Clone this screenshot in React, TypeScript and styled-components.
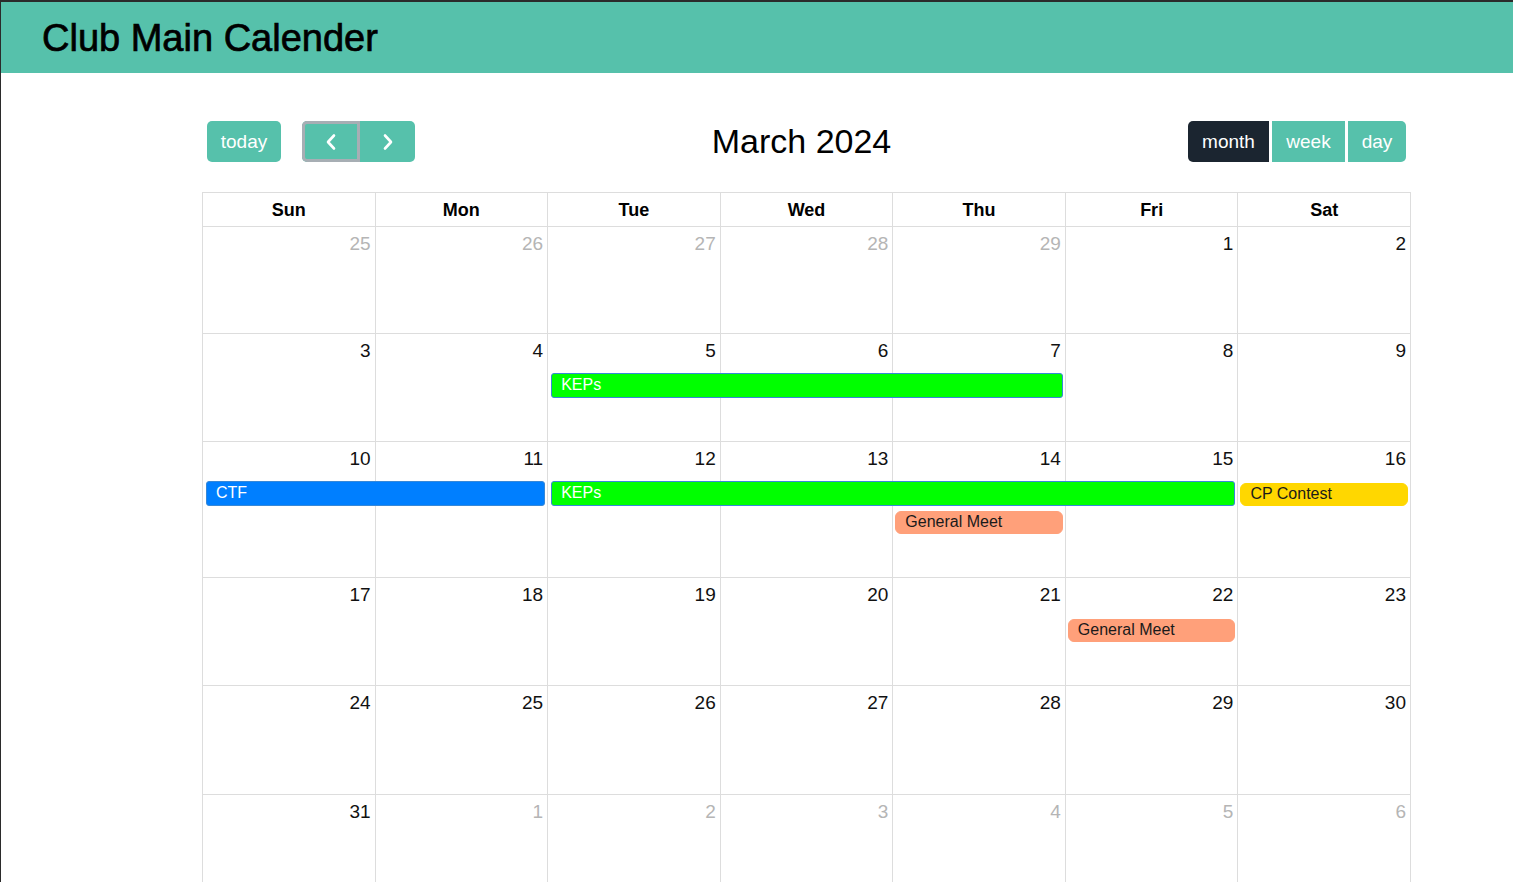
import React from "react";
import styled, { createGlobalStyle } from "styled-components";

const GlobalStyle = createGlobalStyle`
  html, body { margin: 0; padding: 0; background: #fff; }
  body { font-family: "Liberation Sans", Arial, sans-serif; color: #000; }
  * { box-sizing: border-box; }
`;

const Page = styled.div`
  min-height: 100vh;
  border-top: 2px solid #2b2b2b;
  border-left: 1px solid #2b2b2b;
  overflow: hidden;
`;

const Header = styled.header`
  height: 71px;
  background: #56c1ab;
  display: flex;
  align-items: center;
  padding-left: 41px;
`;

const Title = styled.h1`
  margin: 0;
  font-size: 38px;
  font-weight: 400;
  -webkit-text-stroke: 0.7px #000;
  line-height: 1;
  padding-top: 1px;
`;

const CalendarWrap = styled.div`
  margin-left: 201px;
  width: 1209px;
`;

const Toolbar = styled.div`
  margin-top: 48px;
  margin-bottom: 30px;
  height: 41px;
  padding: 0 5px 0 5px;
  display: flex;
  align-items: center;
  justify-content: space-between;
`;

const LeftTools = styled.div`
  display: flex;
  align-items: center;
  gap: 21px;
`;

const Group = styled.div<{ $gap?: number }>`
  display: flex;
  gap: ${(p) => p.$gap ?? 0}px;
`;

const Btn = styled.button<{
  $w: number;
  $active?: boolean;
  $focus?: boolean;
  $round?: "all" | "left" | "right" | "none";
}>`
  width: ${(p) => p.$w}px;
  height: 41px;
  border: none;
  padding: 0;
  margin: 0;
  display: flex;
  align-items: center;
  justify-content: center;
  background: ${(p) => (p.$active ? "#1b2530" : "#56c1ab")};
  color: #fff;
  font-family: "Liberation Sans", Arial, sans-serif;
  font-size: 19px;
  cursor: pointer;
  border-radius: ${(p) =>
    p.$round === "left"
      ? "5px 0 0 5px"
      : p.$round === "right"
      ? "0 5px 5px 0"
      : p.$round === "none"
      ? "0"
      : "5px"};
  box-shadow: ${(p) => (p.$focus ? "inset 0 0 0 3px #a7aeb4" : "none")};
`;

const MonthTitle = styled.h2`
  margin: 0;
  font-size: 34px;
  font-weight: 400;
  line-height: 1;
  padding-bottom: 1px;
`;

const Grid = styled.div`
  border-top: 1px solid #ddd;
  border-left: 1px solid #ddd;
`;

const HeadRow = styled.div`
  display: grid;
  grid-template-columns: repeat(7, 1fr);
  height: 34px;
`;

const HeadCell = styled.div`
  border-right: 1px solid #ddd;
  border-bottom: 1px solid #ddd;
  display: flex;
  align-items: center;
  justify-content: center;
  font-size: 18px;
  font-weight: 700;
  padding-top: 1px;
`;

const Week = styled.div<{ $h: number }>`
  display: grid;
  grid-template-columns: repeat(7, 1fr);
  grid-template-rows: 39px 28px 28px 1fr;
  height: ${(p) => p.$h}px;
`;

const DayCell = styled.div<{ $col: number }>`
  grid-column: ${(p) => p.$col};
  grid-row: 1 / -1;
  border-right: 1px solid #ddd;
  border-bottom: 1px solid #ddd;
`;

const DayNum = styled.div<{ $col: number; $other?: boolean }>`
  grid-column: ${(p) => p.$col};
  grid-row: 1;
  text-align: right;
  padding: 6px 5px 0 0;
  font-size: 19px;
  line-height: 22px;
  color: ${(p) => (p.$other ? "#b5b5b5" : "#111")};
`;

const Event = styled.div<{
  $start: number;
  $span: number;
  $lane: number;
  $bg: string;
  $border: string;
  $color: string;
  $pill?: boolean;
}>`
  grid-column: ${(p) => p.$start} / span ${(p) => p.$span};
  grid-row: ${(p) => p.$lane + 1};
  align-self: start;
  margin: ${(p) => (p.$pill ? "2px 3px 0 2px" : "0 3px 0 3px")};
  height: ${(p) => (p.$pill ? 23 : 25)}px;
  background: ${(p) => p.$bg};
  border: 1px solid ${(p) => p.$border};
  border-radius: ${(p) => (p.$pill ? 6 : 3)}px;
  color: ${(p) => p.$color};
  font-size: 16px;
  line-height: ${(p) => (p.$pill ? 20 : 21)}px;
  padding-left: 9px;
  white-space: nowrap;
  overflow: hidden;
  position: relative;
`;

const Chevron = ({ dir }: { dir: "left" | "right" }) => (
  <svg width="14" height="18" viewBox="0 0 14 18" fill="none">
    <path
      d={dir === "left" ? "M10 2.5 L4 9 L10 15.5" : "M4 2.5 L10 9 L4 15.5"}
      stroke="#fff"
      strokeWidth="2.6"
      strokeLinecap="round"
      strokeLinejoin="round"
    />
  </svg>
);

type Ev = {
  title: string;
  start: number;
  span: number;
  lane: number;
  kind: "green" | "blue" | "gold" | "salmon";
};

const kinds = {
  green: { bg: "#00ff00", border: "#3788d8", color: "#fff", pill: false },
  blue: { bg: "#007fff", border: "#3788d8", color: "#fff", pill: false },
  gold: { bg: "#ffd700", border: "#ffd700", color: "#1a1a1a", pill: true },
  salmon: { bg: "#ffa07a", border: "#ffa07a", color: "#1a1a1a", pill: true },
};

const weeks: { days: { n: number; other?: boolean }[]; h: number; events: Ev[] }[] = [
  {
    h: 107,
    days: [
      { n: 25, other: true },
      { n: 26, other: true },
      { n: 27, other: true },
      { n: 28, other: true },
      { n: 29, other: true },
      { n: 1 },
      { n: 2 },
    ],
    events: [],
  },
  {
    h: 108,
    days: [3, 4, 5, 6, 7, 8, 9].map((n) => ({ n })),
    events: [{ title: "KEPs", start: 3, span: 3, lane: 1, kind: "green" }],
  },
  {
    h: 136,
    days: [10, 11, 12, 13, 14, 15, 16].map((n) => ({ n })),
    events: [
      { title: "CTF", start: 1, span: 2, lane: 1, kind: "blue" },
      { title: "KEPs", start: 3, span: 4, lane: 1, kind: "green" },
      { title: "CP Contest", start: 7, span: 1, lane: 1, kind: "gold" },
      { title: "General Meet", start: 5, span: 1, lane: 2, kind: "salmon" },
    ],
  },
  {
    h: 108,
    days: [17, 18, 19, 20, 21, 22, 23].map((n) => ({ n })),
    events: [{ title: "General Meet", start: 6, span: 1, lane: 1, kind: "salmon" }],
  },
  {
    h: 109,
    days: [24, 25, 26, 27, 28, 29, 30].map((n) => ({ n })),
    events: [],
  },
  {
    h: 108,
    days: [
      { n: 31 },
      { n: 1, other: true },
      { n: 2, other: true },
      { n: 3, other: true },
      { n: 4, other: true },
      { n: 5, other: true },
      { n: 6, other: true },
    ],
    events: [],
  },
];

const dayNames = ["Sun", "Mon", "Tue", "Wed", "Thu", "Fri", "Sat"];

export default function App() {
  return (
    <>
      <GlobalStyle />
      <Page>
        <Header>
          <Title>Club Main Calender</Title>
        </Header>
        <CalendarWrap>
          <Toolbar>
            <LeftTools>
              <Btn $w={74}>today</Btn>
              <Group>
                <Btn $w={58} $round="left" $focus aria-label="prev">
                  <Chevron dir="left" />
                </Btn>
                <Btn $w={55} $round="right" aria-label="next">
                  <Chevron dir="right" />
                </Btn>
              </Group>
            </LeftTools>
            <MonthTitle>March 2024</MonthTitle>
            <Group $gap={3}>
              <Btn $w={81} $round="left" $active>
                month
              </Btn>
              <Btn $w={73} $round="none">
                week
              </Btn>
              <Btn $w={58} $round="right">
                day
              </Btn>
            </Group>
          </Toolbar>
          <Grid>
            <HeadRow>
              {dayNames.map((d) => (
                <HeadCell key={d}>{d}</HeadCell>
              ))}
            </HeadRow>
            {weeks.map((w, wi) => (
              <Week key={wi} $h={w.h}>
                {w.days.map((d, di) => (
                  <DayCell key={"c" + di} $col={di + 1} />
                ))}
                {w.days.map((d, di) => (
                  <DayNum key={"n" + di} $col={di + 1} $other={d.other}>
                    {d.n}
                  </DayNum>
                ))}
                {w.events.map((e, ei) => {
                  const k = kinds[e.kind];
                  return (
                    <Event
                      key={"e" + ei}
                      $start={e.start}
                      $span={e.span}
                      $lane={e.lane}
                      $bg={k.bg}
                      $border={k.border}
                      $color={k.color}
                      $pill={k.pill}
                    >
                      {e.title}
                    </Event>
                  );
                })}
              </Week>
            ))}
          </Grid>
        </CalendarWrap>
      </Page>
    </>
  );
}
